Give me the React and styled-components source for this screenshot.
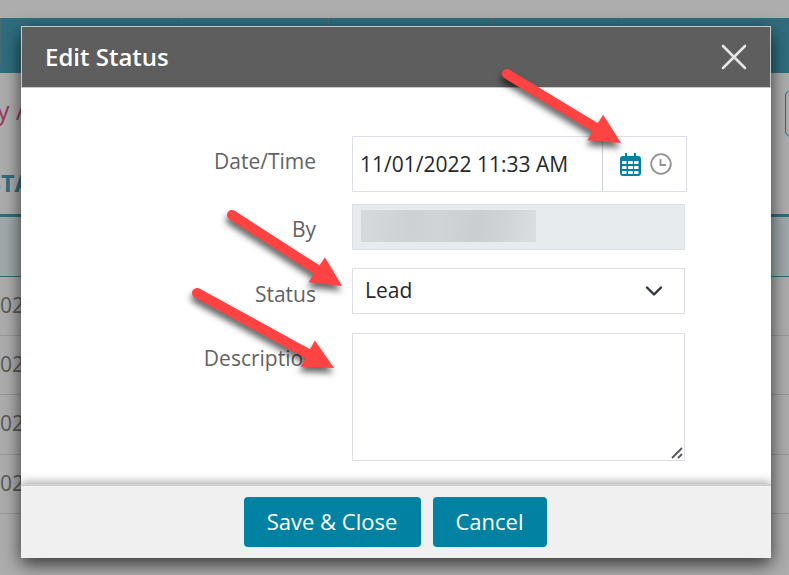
import React from "react";
import styled, { createGlobalStyle } from "styled-components";

const Global = createGlobalStyle`
  *, *::before, *::after { box-sizing: border-box; }
  body { margin: 0; overflow: hidden; font-family: "Open Sans", "Noto Sans", sans-serif; }
`;

const Screen = styled.div`
  position: relative;
  width: 789px;
  height: 575px;
  overflow: hidden;
  background: #adadad;
`;

const Page = styled.div`
  display: flex;
  flex-direction: column;
  padding-top: 18px;
`;

const NavBar = styled.div`
  display: flex;
  height: 55px;
  background: #2f6e7e;
`;

const NavCell = styled.div`
  width: ${(p) => p.$width}px;
  height: 48px;
  border-left: 1px solid #4d6a70;
`;

const TitleRow = styled.div`
  display: flex;
  justify-content: space-between;
  height: 92px;
  padding-top: 17px;
`;

const PageTitle = styled.div`
  margin-left: -3px;
  line-height: 40px;
  font-size: 25px;
  white-space: nowrap;
  color: #963a5c;
`;

const OutlineButton = styled.div`
  width: 60px;
  height: 47px;
  margin-right: -56px;
  border: 1px solid #2f6e7e;
  border-radius: 6px;
`;

const SectionHead = styled.div`
  height: 52px;
  padding-top: 3px;
  margin-left: -12px;
  font-size: 23.5px;
  font-weight: 700;
  line-height: 30px;
  color: #2f6e7e;
`;

const FilterBand = styled.div`
  height: 63px;
  margin-top: -3px;
  border-top: 3px solid #2f6e7e;
  border-bottom: 1px solid #2f6e7e;
  background: #a0a9ab;
`;

const TableRow = styled.div`
  height: 59.2px;
  border-bottom: 1px solid #999;
  font-size: 21px;
  line-height: 56px;
  color: #595959;
`;

const Dialog = styled.section`
  position: absolute;
  left: 21px;
  top: 26px;
  width: 750px;
  height: 532px;
  display: flex;
  flex-direction: column;
  background: #fff;
  box-shadow: 0 6px 17px rgba(0, 0, 0, 0.7);
`;

const Header = styled.header`
  display: flex;
  align-items: center;
  justify-content: space-between;
  height: 62px;
  padding: 0 23px;
  border: 1px solid #c8c8c8;
  background: #5e5e5e;
`;

const Title = styled.h2`
  margin: 0;
  padding-bottom: 1px;
  font-size: 24px;
  line-height: 32px;
  font-weight: 640;
  color: #fff;
`;

const Form = styled.div`
  flex: 1;
  padding: 48px 84px 0 131px;
`;

const Field = styled.div`
  display: grid;
  grid-template-columns: 164px 335px;
  column-gap: 36px;
  height: ${(p) => p.$height}px;
  margin-bottom: ${(p) => p.$gap}px;
`;

const Label = styled.label`
  padding-top: ${(p) => p.$top}px;
  line-height: 30px;
  font-size: 21px;
  text-align: right;
  color: #626262;
`;

const Control = styled.div`
  display: flex;
  align-items: center;
  width: ${(p) => p.$width || 333}px;
  border: 1px solid #dcdfe5;
  background: ${(p) => (p.$disabled ? "#e7ebee" : "#fff")};
  font-size: 21px;
  color: #24282d;
`;

const DateText = styled.span`
  width: 249px;
  padding-left: 7px;
  white-space: nowrap;
`;

const Pickers = styled.span`
  display: flex;
  align-items: center;
  height: 100%;
  padding-left: 17px;
  gap: 9px;
  border-left: 1px solid #cdd1da;
`;

const Redacted = styled.span`
  width: 175px;
  height: 32px;
  margin: -2px 0 0 8px;
  background: linear-gradient(100deg, #d6dadd, #cdd1d4 28%, #d0d4d6 44%, #caced1 66%, #d0d4d6 82%, #dbdfe2);
`;

const SelectText = styled.span`
  flex: 1;
  padding: 0 0 2px 12px;
`;

const Chevron = styled.svg`
  margin-right: 20px;
`;

const Area = styled(Control)`
  align-items: flex-end;
  justify-content: flex-end;
  padding: 0 1px 1px 0;
`;

const Footer = styled.footer`
  display: flex;
  justify-content: center;
  gap: 12px;
  height: 74px;
  padding: 11px 1px 0 0;
  border-top: 2px solid #d0d0d0;
  background: #f0f0f0;
  box-shadow: 0 -1px 10px rgba(0, 0, 0, 0.4);
  clip-path: inset(-14px 0 0 0);
`;

const Button = styled.button`
  width: ${(p) => p.$width}px;
  height: 50px;
  padding: 0 1px 2px 0;
  border: 0;
  border-radius: 4px;
  background: #0282a3;
  color: #fff;
  font: 500 22px "Open Sans", sans-serif;
`;

const Arrows = styled.svg`
  position: absolute;
  inset: 0;
  filter: drop-shadow(-1px 5px 3px rgba(0, 0, 0, 0.6));
`;

const arrows = [
  { x1: 507, y1: 74, x2: 621, y2: 143 },
  { x1: 232, y1: 215, x2: 342, y2: 286 },
  { x1: 197, y1: 293, x2: 334, y2: 368 },
];

function Arrow({ x1, y1, x2, y2 }) {
  const length = Math.hypot(x2 - x1, y2 - y1);
  const angle = (Math.atan2(y2 - y1, x2 - x1) * 180) / Math.PI;
  return (
    <g transform={`translate(${x1} ${y1}) rotate(${angle})`} fill="#ff4343">
      <path d={`M0 -5H${length - 28}V5H0A5 5 0 0 1 0 -5Z`} />
      <path d={`M${length} 0L${length - 30} -15V15Z`} />
    </g>
  );
}

function CalendarIcon() {
  return (
    <svg width="21" height="24" viewBox="0 0 21 24">
      <path fill="#0282a3" d="M5 1h2v3h7V1h2v3h2q3 0 3 3v14q0 3-3 3H3q-3 0-3-3V7q0-3 3-3h2z" />
      <g fill="#fff">
        {[9, 14, 19].map((y) =>
          [2, 8, 14].map((x) => <rect key={`${x}-${y}`} x={x} y={y} width={x === 8 ? 5 : 4.5} height="3" rx=".4" />)
        )}
      </g>
    </svg>
  );
}

function ClockIcon() {
  return (
    <svg width="22" height="22" viewBox="0 0 22 22" fill="none" stroke="#919191" strokeWidth="1.8">
      <circle cx="11" cy="11" r="9.8" />
      <path d="M10.5 6v6H16" />
    </svg>
  );
}

export default function App() {
  return (
    <Screen>
      <Global />
      <Page>
        <NavBar>
          {[181, 147, 164, 129, 168].map((w, i) => <NavCell key={i} $width={w} />)}
        </NavBar>
        <TitleRow>
          <PageTitle>y A</PageTitle>
          <OutlineButton />
        </TitleRow>
        <SectionHead>STA</SectionHead>
        <FilterBand />
        {[0, 1, 2, 3].map((i) => <TableRow key={i}>02</TableRow>)}
      </Page>
      <Dialog>
        <Header>
          <Title>Edit Status</Title>
          <svg width="26" height="26" viewBox="0 0 26 26" stroke="#e6e6e6" strokeWidth="2.6" strokeLinecap="round">
            <path d="M2 2L24 24M24 2L2 24" />
          </svg>
        </Header>
        <Form>
          <Field $height={56} $gap={12}>
            <Label $top={10}>Date/Time</Label>
            <Control $width={335}>
              <DateText>11/01/2022 11:33 AM</DateText>
              <Pickers><CalendarIcon /><ClockIcon /></Pickers>
            </Control>
          </Field>
          <Field $height={46} $gap={18}>
            <Label $top={10}>By</Label>
            <Control $disabled><Redacted /></Control>
          </Field>
          <Field $height={46} $gap={19}>
            <Label $top={11}>Status</Label>
            <Control>
              <SelectText>Lead</SelectText>
              <Chevron width="20" height="12" viewBox="0 0 20 12" fill="none" stroke="#30353b" strokeWidth="2.4" strokeLinecap="round" strokeLinejoin="round">
                <path d="M3 2.5L10 9.5L17 2.5" />
              </Chevron>
            </Control>
          </Field>
          <Field $height={128} $gap={0}>
            <Label $top={10}>Description</Label>
            <Area>
              <svg width="12" height="12" viewBox="0 0 12 12" stroke="#555" strokeWidth="1.8">
                <path d="M1 11L11 1M7 11L11 7" />
              </svg>
            </Area>
          </Field>
        </Form>
        <Footer>
          <Button $width={177}>Save &amp; Close</Button>
          <Button $width={114}>Cancel</Button>
        </Footer>
      </Dialog>
      <Arrows width="789" height="575" viewBox="0 0 789 575">
        {arrows.map((a) => <Arrow key={a.x1} {...a} />)}
      </Arrows>
    </Screen>
  );
}
